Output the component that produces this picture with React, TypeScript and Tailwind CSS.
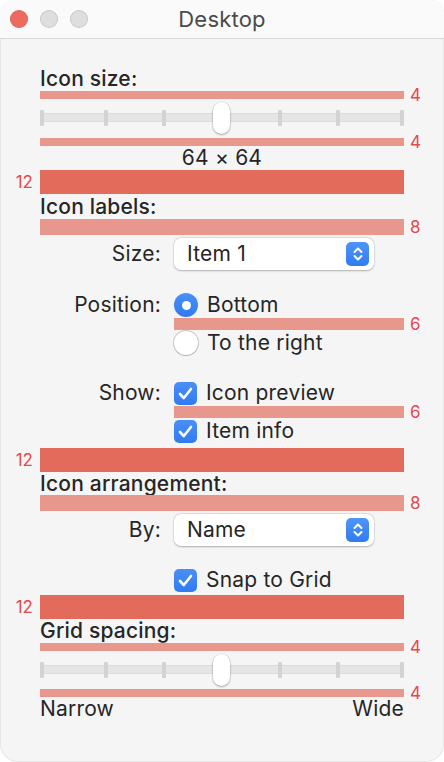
import React from 'react';

const font = { fontFamily: 'Inter, "Noto Sans", "Liberation Sans", sans-serif' };

type BarProps = { h: string; n: string; strong?: boolean; left?: boolean };

const Bar: React.FC<BarProps> = ({ h, n, strong, left }) => (
  <div className={`relative ${h} ${strong ? 'bg-[#e26b5c]' : 'bg-[#e8978c]'}`}>
    <span
      className={`absolute top-1/2 -translate-y-1/2 text-[17px] leading-none tracking-normal text-[#e5484d] ${
        left ? 'right-full mr-[7px]' : 'left-full ml-[6px]'
      }`}
    >
      {n}
    </span>
  </div>
);

const ticks = ['left-[0px]', 'left-[64px]', 'left-[122px]', 'left-[238px]', 'left-[296px]', 'left-[360px]'];

const Slider: React.FC<{ h: string }> = ({ h }) => (
  <div className={`relative ${h}`}>
    <div className="absolute left-0 right-0 top-[14px] h-[9px] bg-[#e5e5e5] border-y border-[#dcdcdc]" />
    {ticks.map((t) => (
      <div key={t} className={`absolute top-[11px] h-[16px] w-[4px] rounded-[1px] bg-[#d3d3d3] ${t}`} />
    ))}
    <div className="absolute left-[173px] top-[3px] h-[32px] w-[17px] rounded-full bg-white shadow-[0_1px_2px_rgba(0,0,0,0.3),0_0_0_0.5px_rgba(0,0,0,0.12)]" />
  </div>
);

const Popup: React.FC<{ label: string }> = ({ label }) => (
  <div className="flex h-[32px] w-[200px] items-center justify-between rounded-[7px] bg-white pl-[13px] pr-[5px] shadow-[0_0.5px_2px_rgba(0,0,0,0.25),0_0_0_0.5px_rgba(0,0,0,0.08)]">
    <span className="text-[21px] text-[#262626]">{label}</span>
    <div className="flex h-[24px] w-[23px] items-center justify-center rounded-[5px] bg-gradient-to-b from-[#4f95f7] to-[#2f7bf1]">
      <svg width="12" height="16" viewBox="0 0 12 16" fill="none" stroke="white" strokeWidth="2" strokeLinecap="round" strokeLinejoin="round">
        <path d="M2.5 6 L6 2.5 L9.5 6" />
        <path d="M2.5 10 L6 13.5 L9.5 10" />
      </svg>
    </div>
  </div>
);

const Radio: React.FC<{ on?: boolean }> = ({ on }) =>
  on ? (
    <div className="flex h-[24px] w-[24px] items-center justify-center rounded-full bg-gradient-to-b from-[#4a8ff7] to-[#2f7bf1]">
      <div className="h-[9px] w-[9px] rounded-full bg-white" />
    </div>
  ) : (
    <div className="h-[24px] w-[24px] rounded-full bg-white shadow-[0_0_0_1px_rgba(0,0,0,0.18),0_1px_1px_rgba(0,0,0,0.1)]" />
  );

const Check: React.FC = () => (
  <div className="flex h-[23px] w-[23px] items-center justify-center rounded-[5px] bg-gradient-to-b from-[#4a8ff7] to-[#2f7bf1]">
    <svg width="15" height="13" viewBox="0 0 15 13" fill="none" stroke="white" strokeWidth="2.6" strokeLinecap="round" strokeLinejoin="round">
      <path d="M2 7 L5.8 11 L13 2" />
    </svg>
  </div>
);

const Row: React.FC<{ label?: string; children: React.ReactNode; className?: string }> = ({ label, children, className }) => (
  <div className={`grid grid-cols-[121px_1fr] gap-x-[13px] ${className ?? ''}`}>
    <div className="flex h-[26px] items-center justify-end text-[21px] text-[#262626]">{label}</div>
    <div>{children}</div>
  </div>
);

const Option: React.FC<{ control: React.ReactNode; text: string }> = ({ control, text }) => (
  <div className="flex h-[26px] items-center gap-[9px] text-[21px] text-[#262626]">
    {control}
    <span>{text}</span>
  </div>
);

export default function App() {
  return (
    <div className="h-[762px] w-[444px] bg-white tracking-[0.2px]" style={font}>
      <div className="flex h-[762px] w-[444px] flex-col overflow-hidden rounded-t-[13px] rounded-b-[18px] bg-[#f5f5f5] shadow-[inset_0_0_0_1px_rgba(0,0,0,0.06)]">
        <div className="relative flex h-[39px] items-center justify-center border-b border-[#d9d9d9] bg-[#fafafa]">
          <div className="absolute left-[10px] top-[10px] flex gap-[12px]">
            <div className="h-[18px] w-[18px] rounded-full bg-[#ee6a5f] shadow-[inset_0_0_0_0.5px_rgba(0,0,0,0.15)]" />
            <div className="h-[18px] w-[18px] rounded-full bg-[#dedede] shadow-[inset_0_0_0_1px_rgba(0,0,0,0.1)]" />
            <div className="h-[18px] w-[18px] rounded-full bg-[#dedede] shadow-[inset_0_0_0_1px_rgba(0,0,0,0.1)]" />
          </div>
          <span className="text-[22px] text-[#4b4b4b]">Desktop</span>
        </div>

        <div className="flex flex-col px-[40px] pt-[28px] text-[#262626]">
          <div className="h-[24px] text-[21px] font-medium leading-[24px]">Icon size:</div>
          <Bar h="h-[8px]" n="4" />
          <Slider h="h-[39px]" />
          <Bar h="h-[8px]" n="4" />
          <div className="h-[24px] text-center text-[21px] leading-[24px]">64 × 64</div>
          <Bar h="h-[24px]" n="12" strong left />

          <div className="h-[25px] text-[21px] font-medium leading-[25px]">Icon labels:</div>
          <Bar h="h-[16px]" n="8" />
          <Row label="Size:" className="mt-[3px] items-center [&>div:first-child]:h-[32px]">
            <Popup label="Item 1" />
          </Row>

          <Row label="Position:" className="mt-[22px]">
            <Option control={<Radio on />} text="Bottom" />
            <Bar h="h-[12px]" n="6" />
            <Option control={<Radio />} text="To the right" />
          </Row>

          <Row label="Show:" className="mt-[24px]">
            <Option control={<Check />} text="Icon preview" />
            <Bar h="h-[12px]" n="6" />
            <Option control={<Check />} text="Item info" />
          </Row>

          <div className="mt-[4px]">
            <Bar h="h-[24px]" n="12" strong left />
          </div>
          <div className="h-[23px] text-[21px] font-medium leading-[23px]">Icon arrangement:</div>
          <Bar h="h-[16px]" n="8" />
          <Row label="By:" className="mt-[3px] items-center [&>div:first-child]:h-[32px]">
            <Popup label="Name" />
          </Row>

          <Row className="mt-[21px]">
            <Option control={<Check />} text="Snap to Grid" />
          </Row>
          <div className="mt-[2px]">
            <Bar h="h-[24px]" n="12" strong left />
          </div>
          <div className="h-[24px] text-[21px] font-medium leading-[24px]">Grid spacing:</div>
          <Bar h="h-[8px]" n="4" />
          <Slider h="h-[38px]" />
          <Bar h="h-[8px]" n="4" />
          <div className="flex h-[24px] justify-between text-[21px] leading-[24px]">
            <span>Narrow</span>
            <span>Wide</span>
          </div>
        </div>
      </div>
    </div>
  );
}
